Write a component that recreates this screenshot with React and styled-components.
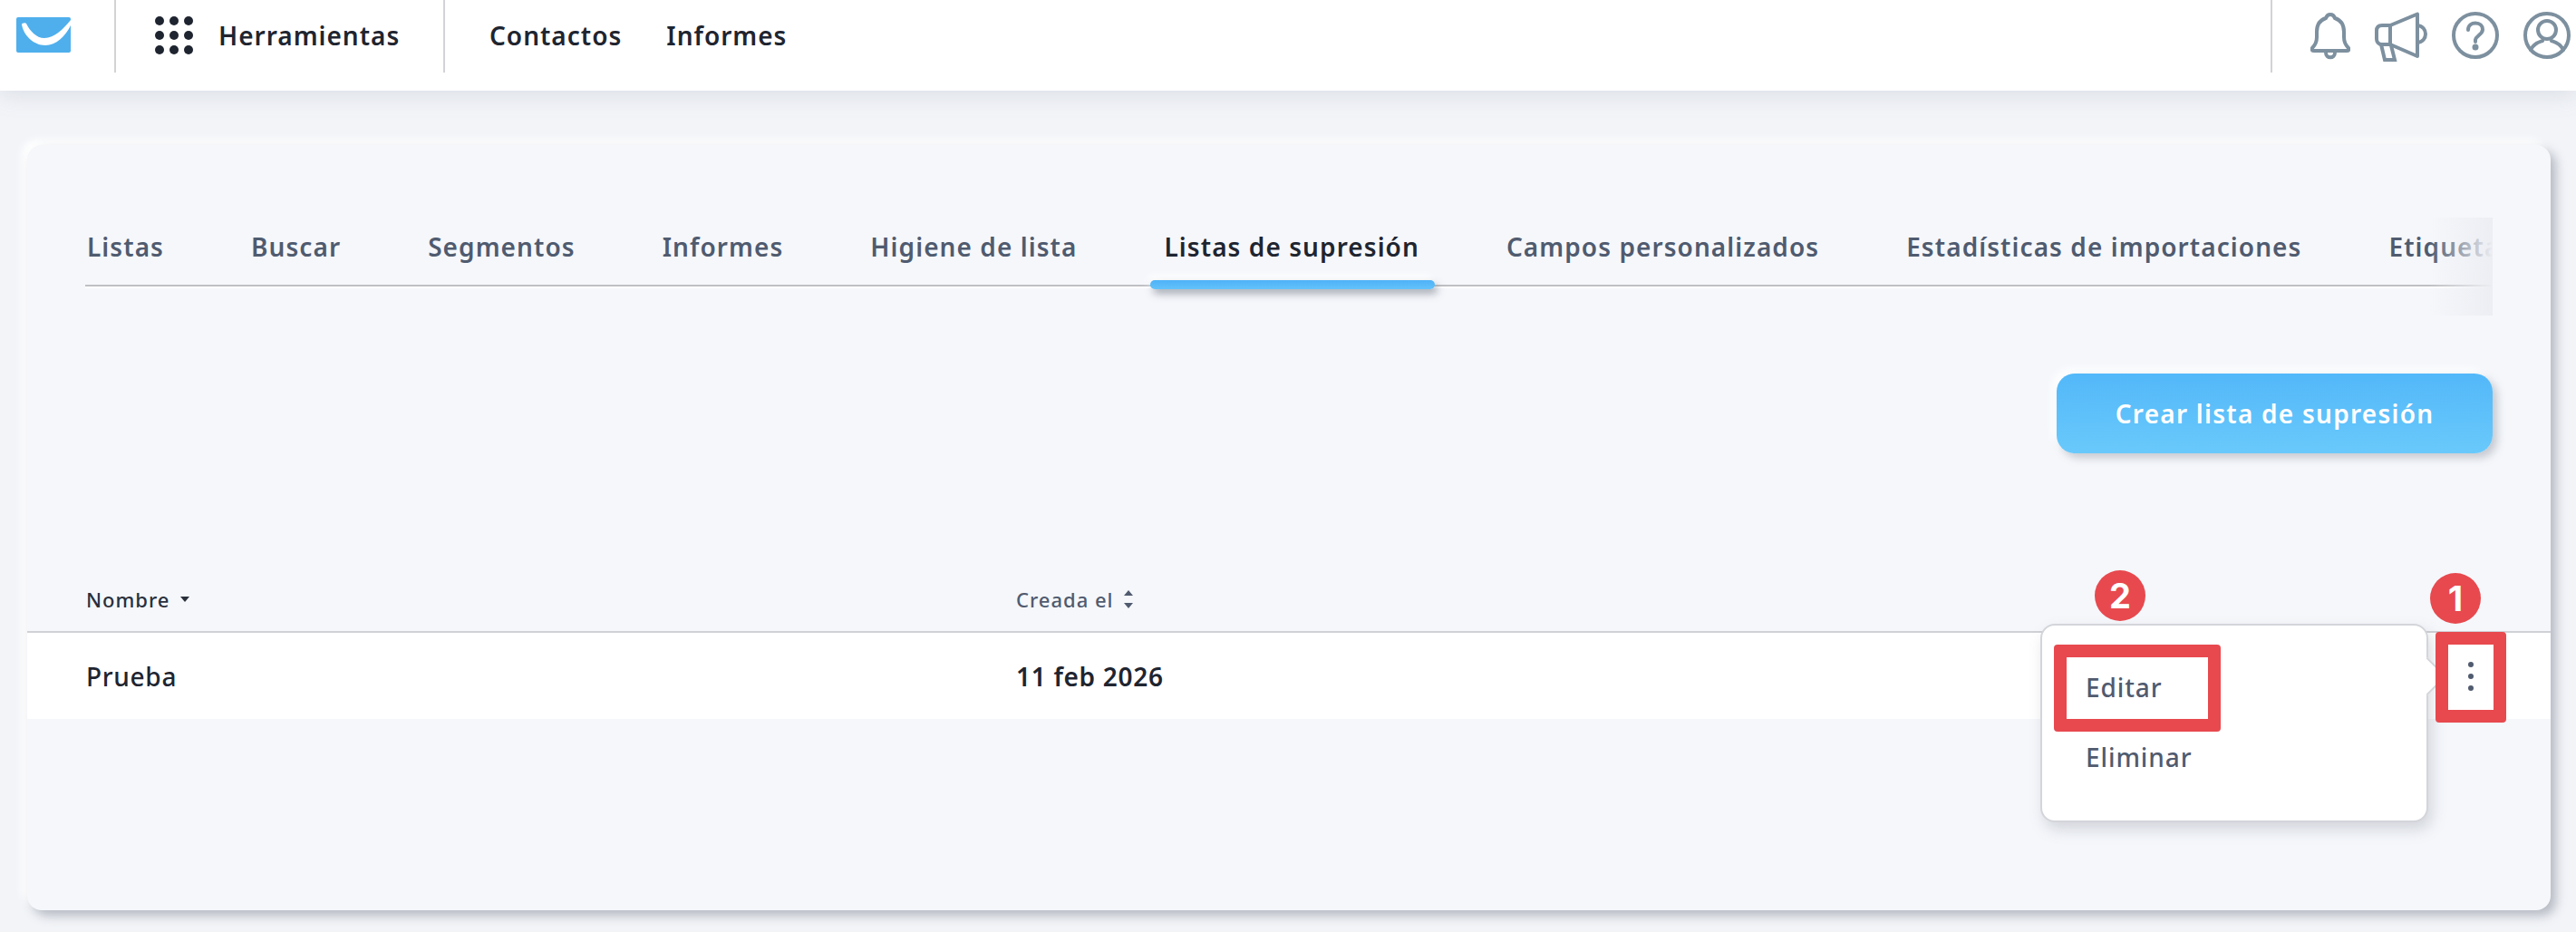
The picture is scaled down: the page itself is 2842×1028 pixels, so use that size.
import React from 'react'
import styled, { createGlobalStyle } from 'styled-components'

const tabs = [
  'Listas',
  'Buscar',
  'Segmentos',
  'Informes',
  'Higiene de lista',
  'Listas de supresión',
  'Campos personalizados',
  'Estadísticas de importaciones',
  'Etiquetas',
]

function Logo() {
  return (
    <svg width="60" height="39" viewBox="0 0 60 39">
      <rect width="60" height="39" rx="2" fill="#4fafec" />
      <path
        d="M6 8C6 6.500 10 5.500 11 7C15 15 22 23 31 23C42 23 52 13 60 3V9C54 21 44 31 32 31C19 31 8 20 6 8Z"
        fill="#fff"
      />
    </svg>
  )
}

function GridIcon() {
  const dots = []
  for (let r = 0; r < 3; r++) {
    for (let c = 0; c < 3; c++) {
      dots.push(<circle key={`${r}-${c}`} cx={5 + c * 16} cy={5 + r * 16} r="5" fill="#1f2530" />)
    }
  }
  return (
    <svg width="42" height="42" viewBox="0 0 42 42">
      {dots}
    </svg>
  )
}

function BellIcon() {
  return (
    <IconSvg width="44" height="54" viewBox="0 0 44 54">
      <path d="M22 3C24.500 3 26 4 27 7C33 9 37 14 37 22V28C37 34 39 37 42 40C43 42 42 43 40 43H4C2 43 1 42 2 40C5 37 7 34 7 28V22C7 14 11 9 17 7C18 4 19.500 3 22 3Z" />
      <path d="M17 45C17 52 27 52 27 45" />
    </IconSvg>
  )
}

function MegaphoneIcon() {
  return (
    <IconSvg width="58" height="56" viewBox="0 0 58 56">
      <path d="M17 15H8C4 15 2 17 2 21V30C2 33 4 36 8 36H17Z" />
      <path d="M17 15L47 2.500V49L17 36" strokeLinejoin="round" />
      <path d="M7 36L11 53H22L18 37" />
      <path d="M47 15C59 16 59 33 47 34" />
    </IconSvg>
  )
}

function QuestionIcon() {
  return (
    <IconSvg width="52" height="52" viewBox="0 0 52 52">
      <circle cx="26" cy="26" r="24" />
      <path d="M18 20C18 15 22 12.500 26 12.500C31 12.500 34 15.500 34 19.500C34 25 27 26 26 31V33" />
      <circle cx="26" cy="39" r="3.500" fill="#7d909f" stroke="none" />
    </IconSvg>
  )
}

function UserIcon() {
  return (
    <IconSvg width="52" height="52" viewBox="0 0 52 52">
      <circle cx="26" cy="26" r="24" />
      <circle cx="26" cy="20" r="10" />
      <path d="M8 42C12 34 18 33 21 32M44 42C40 34 34 33 31 32" />
    </IconSvg>
  )
}

export default function App() {
  return (
    <>
      <GlobalStyle />
      <Page>
        <TopBar>
          <LogoCell>
            <Logo />
          </LogoCell>
          <ToolsCell>
            <GridIcon />
            <NavText>Herramientas</NavText>
          </ToolsCell>
          <LinksCell>
            <NavText>Contactos</NavText>
            <NavText>Informes</NavText>
          </LinksCell>
          <Actions>
            <BellIcon />
            <MegaphoneIcon />
            <QuestionIcon />
            <UserIcon />
          </Actions>
        </TopBar>
        <Card>
          <TabStrip>
            <TabRow>
              {tabs.map((tab) => (
                <Tab key={tab} $active={tab === 'Listas de supresión'}>
                  {tab}
                </Tab>
              ))}
            </TabRow>
            <TabFade />
          </TabStrip>
          <ButtonRow>
            <CreateButton>Crear lista de supresión</CreateButton>
          </ButtonRow>
          <TableHead>
            <NameHead>
              Nombre
              <svg width="10" height="6" viewBox="0 0 10 6">
                <path d="M0 0H10L5 6Z" fill="#2a303b" />
              </svg>
            </NameHead>
            <DateHead>
              Creada el
              <svg width="10" height="20" viewBox="0 0 10 20">
                <path d="M5 0L10 6H0ZM0 14H10L5 20Z" fill="#505b6f" />
              </svg>
            </DateHead>
          </TableHead>
          <TableRow>
            <NameCell>Prueba</NameCell>
            <DateCell>11 feb 2026</DateCell>
            <DotsButton>
              <Dot />
              <Dot />
              <Dot />
            </DotsButton>
          </TableRow>
          <Menu>
            <MenuArrow />
            <MenuItem>Editar</MenuItem>
            <MenuItem>Eliminar</MenuItem>
          </Menu>
          <MarkEdit />
          <MarkDots />
          <Badge $left={2281} $top={469}>2</Badge>
          <Badge $left={2651} $top={472}>1</Badge>
        </Card>
      </Page>
    </>
  )
}

const GlobalStyle = createGlobalStyle`
  html, body {
    margin: 0;
    padding: 0;
    background: #f2f4f8;
  }
  * {
    box-sizing: border-box;
  }
`

const Page = styled.div`
  width: 2842px;
  height: 1028px;
  overflow: hidden;
  font-family: 'Noto Sans', 'Open Sans', sans-serif;
  background: #f2f4f8;
`

const TopBar = styled.header`
  display: flex;
  height: 100px;
  background: #fff;
  box-shadow: 0 4px 24px rgba(130, 140, 160, 0.22);
  position: relative;
`

const LogoCell = styled.div`
  width: 128px;
  height: 80px;
  padding: 19px 0 0 18px;
  border-right: 2px solid #d2d3d6;
`

const ToolsCell = styled.div`
  width: 363px;
  height: 80px;
  padding: 18px 0 0 43px;
  display: flex;
  gap: 28px;
  border-right: 2px solid #d2d3d6;
`

const LinksCell = styled.nav`
  display: flex;
  gap: 49px;
  padding: 18px 0 0 49px;
  flex: 1;
  height: 80px;
`

const NavText = styled.span`
  font-size: 28px;
  line-height: 42px;
  font-weight: 600;
  letter-spacing: 1px;
  color: #1f2530;
`

const Actions = styled.div`
  display: flex;
  align-items: flex-start;
  width: 337px;
  height: 80px;
  padding: 13px 6px 0 42px;
  justify-content: space-between;
  border-left: 2px solid #d2d3d6;
`

const IconSvg = styled.svg`
  fill: none;
  stroke: #7d909f;
  stroke-width: 4;
  stroke-linecap: round;
`

const Card = styled.main`
  position: relative;
  width: 2784px;
  height: 844px;
  margin: 60px 0 0 30px;
  border-radius: 16px;
  background: #f5f7fb;
  box-shadow: 6px 6px 12px rgba(110, 115, 130, 0.45), -6px -6px 8px #fff;
`

const TabStrip = styled.div`
  position: relative;
  width: 2656px;
  height: 190px;
  margin-left: 64px;
  overflow: hidden;
`

const TabRow = styled.div`
  display: flex;
  gap: 96px;
  align-items: flex-start;
  height: 156px;
  padding: 90px 0 0 2px;
  white-space: nowrap;
  border-bottom: 2px solid #bfc0c3;
  box-shadow: 0 2px 0 #fff;
`

const Tab = styled.div`
  position: relative;
  font-size: 28px;
  line-height: 44px;
  font-weight: 600;
  letter-spacing: 1.07px;
  color: ${(p) => (p.$active ? '#1f2530' : '#505b6f')};
  ${(p) =>
    p.$active &&
    `
    &::after {
      content: '';
      position: absolute;
      left: -16px;
      right: -17px;
      top: 59px;
      height: 10px;
      border-radius: 5px;
      background: linear-gradient(#4fb2f7, #62c2fa);
      box-shadow: 3px 5px 8px rgba(90, 95, 110, 0.5), -3px -5px 8px #fff;
    }
  `}
`

const TabFade = styled.div`
  position: absolute;
  top: 80px;
  right: 0;
  width: 70px;
  height: 108px;
  background: linear-gradient(to right, rgba(236, 238, 243, 0), #eceef3);
`

const ButtonRow = styled.div`
  display: flex;
  justify-content: flex-end;
  padding: 62px 64px 0 0;
`

const CreateButton = styled.button`
  width: 481px;
  height: 88px;
  border: 0;
  border-radius: 20px;
  font-family: inherit;
  font-size: 28px;
  font-weight: 600;
  letter-spacing: 1.25px;
  color: #fff;
  background: linear-gradient(#53b8f9, #69c9fb);
  box-shadow: 5px 5px 10px rgba(110, 115, 130, 0.35), -5px -5px 10px #fff;
`

const TableHead = styled.div`
  display: grid;
  grid-template-columns: 1026px 1fr;
  align-items: center;
  height: 198px;
  padding: 134px 0 8px 65px;
  border-bottom: 2px solid #cfd1d6;
`

const HeadCell = styled.div`
  display: flex;
  align-items: center;
  font-size: 22px;
  font-weight: 500;
  letter-spacing: 1px;
`

const NameHead = styled(HeadCell)`
  gap: 12px;
  color: #2a303b;
`

const DateHead = styled(HeadCell)`
  gap: 11px;
  color: #505b6f;
`

const TableRow = styled.div`
  position: relative;
  display: grid;
  grid-template-columns: 1026px 1fr;
  align-items: center;
  height: 95px;
  padding-left: 65px;
  background: #fff;
`

const RowCell = styled.div`
  font-size: 28px;
  font-weight: 500;
  letter-spacing: 0.7px;
  color: #1f2530;
`

const NameCell = styled(RowCell)``

const DateCell = styled(RowCell)`
  font-weight: 600;
`

const DotsButton = styled.div`
  position: absolute;
  right: 85px;
  top: 32px;
  display: flex;
  flex-direction: column;
  gap: 7px;
`

const Dot = styled.span`
  width: 6px;
  height: 6px;
  border-radius: 50%;
  background: #505b6f;
`

const Menu = styled.div`
  position: absolute;
  left: 2221px;
  top: 528px;
  width: 428px;
  height: 219px;
  padding: 30px 0 0 48px;
  background: #fff;
  border: 2px solid #d3d5da;
  border-radius: 16px;
  box-shadow: 4px 8px 16px rgba(110, 115, 130, 0.25);
`

const MenuItem = styled.div`
  font-size: 28px;
  line-height: 77px;
  font-weight: 500;
  letter-spacing: 0.9px;
  color: #505b6f;
`

const MenuArrow = styled.span`
  position: absolute;
  top: 41px;
  right: -16px;
  width: 30px;
  height: 30px;
  background: #fff;
  border-top: 2px solid #d3d5da;
  border-right: 2px solid #d3d5da;
  transform: rotate(45deg);
`

const RedMark = styled.div`
  position: absolute;
  border: 14px solid #e7494e;
  border-radius: 4px;
  background: transparent;
`

const MarkEdit = styled(RedMark)`
  left: 2236px;
  top: 551px;
  width: 184px;
  height: 96px;
`

const MarkDots = styled(RedMark)`
  left: 2657px;
  top: 537px;
  width: 78px;
  height: 100px;
`

const Badge = styled.span`
  position: absolute;
  left: ${(p) => p.$left}px;
  top: ${(p) => p.$top}px;
  width: 56px;
  height: 56px;
  display: flex;
  align-items: center;
  justify-content: center;
  border-radius: 50%;
  font-family: Inter, 'Noto Sans', sans-serif;
  font-size: 38px;
  font-weight: 700;
  color: #fff;
  background: #e7494e;
`
